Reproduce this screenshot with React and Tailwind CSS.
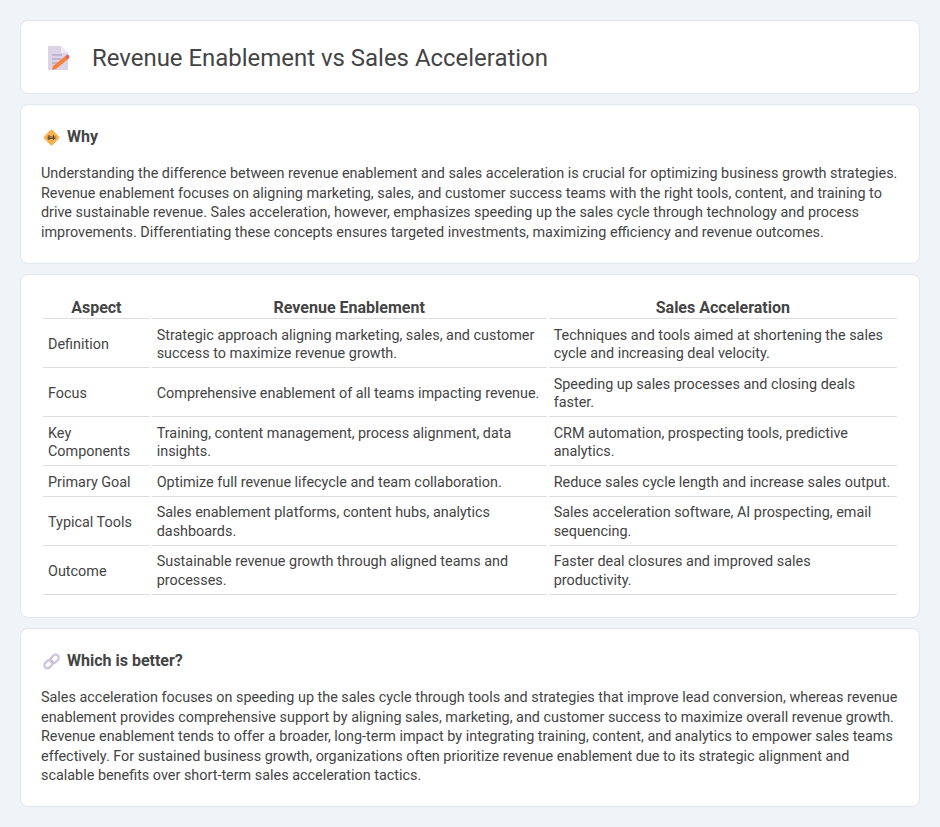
const rows = [
  ["Definition", "Strategic approach aligning marketing, sales, and customer success to maximize revenue growth.", "Techniques and tools aimed at shortening the sales cycle and increasing deal velocity."],
  ["Focus", "Comprehensive enablement of all teams impacting revenue.", "Speeding up sales processes and closing deals faster."],
  ["Key Components", "Training, content management, process alignment, data insights.", "CRM automation, prospecting tools, predictive analytics."],
  ["Primary Goal", "Optimize full revenue lifecycle and team collaboration.", "Reduce sales cycle length and increase sales output."],
  ["Typical Tools", "Sales enablement platforms, content hubs, analytics dashboards.", "Sales acceleration software, AI prospecting, email sequencing."],
  ["Outcome", "Sustainable revenue growth through aligned teams and processes.", "Faster deal closures and improved sales productivity."],
];

function DocIcon() {
  return (
    <svg width="22" height="24" viewBox="0 0 22 24" className="shrink-0">
      <path d="M1 0h13l7 7v17H1z" fill="#dcd3e6" />
      <path d="M14 0l7 7h-7z" fill="#eee9f3" />
      <path d="M5 9h10M5 13h10M5 17h6" stroke="#a59bb3" strokeWidth="1.200" />
      <path d="M6 20L18 10.500l2.500 3L9 23l-4 1z" fill="#f5813d" />
      <path d="M18 10.500l1.500-1.200a1.700 1.700 0 0 1 2.500 3l-1.500 1.200z" fill="#f4574f" />
    </svg>
  );
}

function SignIcon() {
  return (
    <svg width="17" height="17" viewBox="0 0 17 17" className="shrink-0 ml-[2px]">
      <rect x="2.500" y="2.500" width="12" height="12" rx="1.500" transform="rotate(45 8.500 8.500)" fill="#fbb04c" />
      <path d="M6 6v5M10.500 6v5M4.500 8h8M4.500 9.500h8" stroke="#5b4a3a" strokeWidth="1.100" />
    </svg>
  );
}

function LinkIcon() {
  return (
    <svg width="17" height="17" viewBox="0 0 17 17" fill="none" stroke="#cdc2db" strokeWidth="2.200" className="shrink-0 ml-[2px]">
      <rect x="0.800" y="8" width="9.500" height="6.200" rx="3.100" transform="rotate(-45 5.500 11)" />
      <rect x="6.800" y="2.800" width="9.500" height="6.200" rx="3.100" transform="rotate(-45 11.500 6)" />
    </svg>
  );
}

function Card({ children, className }) {
  return <section className={"bg-white border border-[#e2e6ef] rounded-lg " + className}>{children}</section>;
}

export default function App() {
  return (
    <div className="min-h-screen bg-[#f0f3f8] p-5 font-['Roboto',sans-serif] text-[14.4px] leading-[18.4px] text-[#444444] flex flex-col gap-[10px]">
      <Card className="h-[74px] pl-[26px] pt-[2px] flex items-center gap-[23px]">
        <DocIcon />
        <h1 className="text-[23.95px] leading-[30px] font-normal text-[#444444]">Revenue Enablement vs Sales Acceleration</h1>
      </Card>

      <Card className="h-[160px] px-5 pt-[21px]">
        <h2 className="flex items-center gap-[7px] text-[16px] font-bold text-[#444444] h-[22px]">
          <SignIcon />
          Why
        </h2>
        <p className="mt-4 leading-[19.6px]">
          Understanding the difference between revenue enablement and sales acceleration is crucial for optimizing business growth strategies. Revenue enablement focuses on aligning marketing, sales, and customer success teams with the right tools, content, and training to drive sustainable revenue. Sales acceleration, however, emphasizes speeding up the sales cycle through technology and process improvements. Differentiating these concepts ensures targeted investments, maximizing efficiency and revenue outcomes.
        </p>
      </Card>

      <Card className="h-[344px] px-5 pt-[20px]">
        <table className="w-full border-separate border-spacing-[2px] table-fixed">
          <colgroup>
            <col className="w-[106.7px]" />
            <col className="w-[395px]" />
            <col />
          </colgroup>
          <thead>
            <tr>
              <th className="text-[16px] leading-[18.4px] font-bold px-[5px] pt-[2px] pb-[0.6px] border-b border-[#dddddd] text-center">Aspect</th>
              <th className="text-[16px] leading-[18.4px] font-bold px-[5px] pt-[2px] pb-[0.6px] border-b border-[#dddddd] text-center">Revenue Enablement</th>
              <th className="text-[16px] leading-[18.4px] font-bold px-[5px] pt-[2px] pb-[0.6px] border-b border-[#dddddd] text-center">Sales Acceleration</th>
            </tr>
          </thead>
          <tbody>
            {rows.map((r) => (
              <tr key={r[0]}>
                {r.map((c) => (
                  <td key={c} className="pl-[5px] pr-[5px] last:pr-[6px] pt-[5.9px] pb-[3.3px] border-b border-[#dddddd] align-middle">{c}</td>
                ))}
              </tr>
            ))}
          </tbody>
        </table>
      </Card>

      <Card className="h-[179px] px-5 pt-[21px]">
        <h2 className="flex items-center gap-[7px] text-[16px] font-bold text-[#444444] h-[22px]">
          <LinkIcon />
          Which is better?
        </h2>
        <p className="mt-4 leading-[19.6px]">
          Sales acceleration focuses on speeding up the sales cycle through tools and strategies that improve lead conversion, whereas revenue enablement provides comprehensive support by aligning sales, marketing, and customer success to maximize overall revenue growth. Revenue enablement tends to offer a broader, long-term impact by integrating training, content, and analytics to empower sales teams effectively. For sustained business growth, organizations often prioritize revenue enablement due to its strategic alignment and scalable benefits over short-term sales acceleration tactics.
        </p>
      </Card>
    </div>
  );
}
